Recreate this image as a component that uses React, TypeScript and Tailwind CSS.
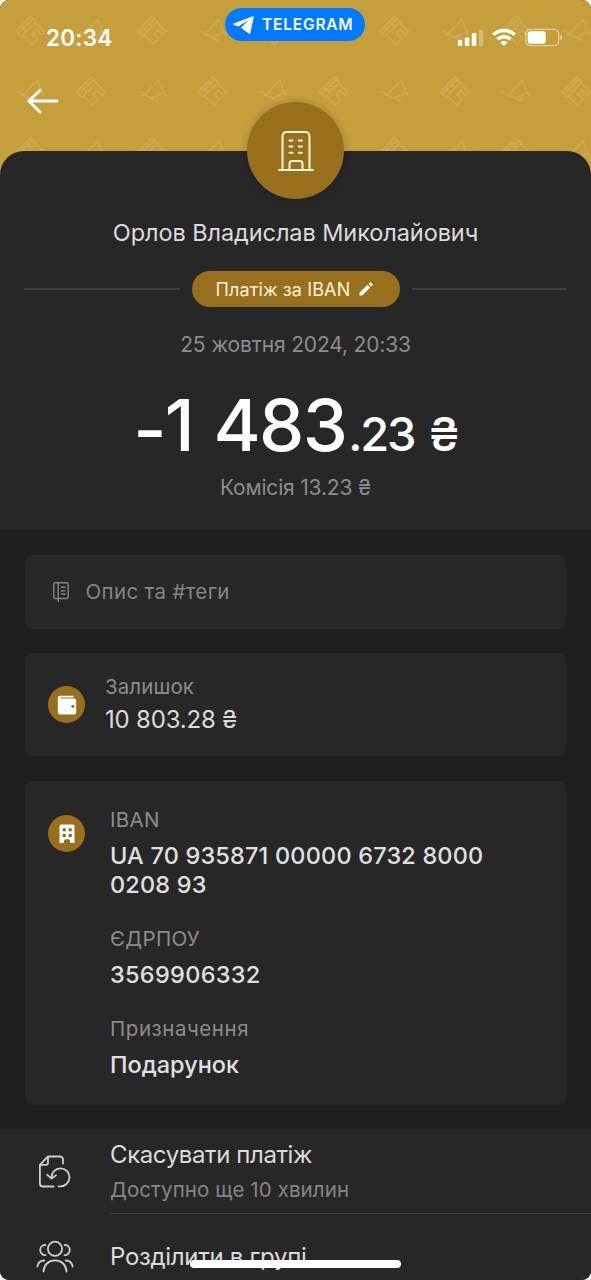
import React from "react";

function HeaderPattern() {
  return (
    <svg className="absolute inset-0 h-full w-full" aria-hidden="true">
      <defs>
        <pattern id="motif" x="0.5" y="0.5" width="121.3" height="121.3" patternUnits="userSpaceOnUse">
          <g fill="none" stroke="#dbb766" strokeOpacity="0.52" strokeWidth="1.3" strokeLinejoin="round" strokeLinecap="round">
            <g id="shop" transform="translate(30.3 30.8) rotate(-45)">
              <path d="M-10.500 -10.500H10.500V-3H-10.500ZM-8.500 -3V10H-0.500V3H5V10H9.500V-3M-3.500 -10.500V-3M3.500 -10.500V-3M-10.500 -7.500H10.500" />
            </g>
            <use href="#shop" x="0" y="0" transform="translate(60.650 60.650)" />
            <g id="cart" transform="translate(90.500 30.500)">
              <path d="M-13 0L-10 0.500L-8 4L7 -11.500L11 0M-8 3L0 6.500L13 0.500L13.500 4M0 6.500L5.500 9.500L6 6" />
            </g>
            <use href="#cart" transform="translate(-60.650 60.650)" />
          </g>
        </pattern>
      </defs>
      <rect width="100%" height="100%" fill="url(#motif)" />
    </svg>
  );
}

function StatusIcons() {
  return (
    <svg width="106" height="20" viewBox="0 0 106 20" fill="none">
      <g fill="#fff">
        <rect x="0.800" y="12" width="4.400" height="6" rx="1" />
        <rect x="7.800" y="9.500" width="4.400" height="8.500" rx="1" />
        <rect x="14.800" y="5" width="4.600" height="13" rx="1" />
        <rect x="21.800" y="2" width="4.400" height="16" rx="1" opacity="0.3" />
        <path d="M47 18 l-3.600 -3.500 a5.200 5.200 0 0 1 7.200 0 z" />
      </g>
      <path d="M40.500 11.300 a9.400 9.400 0 0 1 13 0 M36.300 6.800 a15.600 15.600 0 0 1 21.400 0" stroke="#fff" strokeWidth="3.500" />
      <rect x="68.700" y="1.300" width="33" height="16.400" rx="4.600" stroke="#fff" strokeOpacity="0.5" strokeWidth="1.300" />
      <rect x="70.700" y="3.300" width="18" height="12.400" rx="2.600" fill="#fff" />
      <path d="M103.300 6.800 q2 .8 2 2.700 t-2 2.700z" fill="#fff" fillOpacity="0.55" />
    </svg>
  );
}

function BuildingOutline() {
  return (
    <svg width="36" height="42" viewBox="0 0 36 42" fill="none" stroke="#fff3da" strokeWidth="2" strokeLinecap="round">
      <path d="M1 40H35M4.500 40V6a4 4 0 0 1 4-4h19a4 4 0 0 1 4 4v34M11.500 40v-6a3 3 0 0 1 3-3h7a3 3 0 0 1 3 3v6" />
      <path d="M11.500 10.500h3M20.800 10.500h3M11.500 16.500h3M20.800 16.500h3M11.500 22.700h3M20.800 22.700h3" />
    </svg>
  );
}

function NoteIcon() {
  return (
    <svg width="16" height="20" viewBox="0 0 16 20" fill="none" stroke="#858585" strokeWidth="1.400">
      <rect x="0.800" y="0.800" width="14.400" height="15.700" rx="1.500" />
      <path d="M5.300 1v19M8 5.300h4.500M8 8.700h4.500M8 12h4.500" />
    </svg>
  );
}

function WalletBadge() {
  return (
    <span className="flex size-[37px] shrink-0 items-center justify-center rounded-full bg-[#98701d]">
      <svg width="20" height="20" viewBox="0 0 20 20">
        <path d="M3 .8h13.500v1.700H3.700q-.7.700 0 1.100H17a2.200 2.200 0 0 1 2.200 2.200v11.400A2.200 2.200 0 0 1 17 19.400H3A2.200 2.200 0 0 1 .8 17.200V3A2.200 2.200 0 0 1 3 .8z" fill="#fff" />
        <circle cx="15.900" cy="11.300" r="1.600" fill="#98701d" />
      </svg>
    </span>
  );
}

function BuildingBadge() {
  return (
    <span className="flex size-[37px] shrink-0 items-center justify-center rounded-full bg-[#98701d]">
      <svg width="16" height="20" viewBox="0 0 16 20">
        <path d="M2.500.5h11a2 2 0 0 1 2 2V19H11v-2.200a1.500 1.500 0 0 0-1.500-1.500h-3A1.500 1.500 0 0 0 5 16.800V19H.5V2.500a2 2 0 0 1 2-2z" fill="#fff" />
        <path d="M3.700 4.200h3v3h-3zM9.700 4.200h3v3h-3zM3.700 10h3v3h-3zM9.700 10h3v3h-3z" fill="#7d6a10" />
      </svg>
    </span>
  );
}

function CancelIcon() {
  return (
    <svg className="overflow-visible" width="32" height="34" viewBox="0 0 32 34" fill="none" stroke="#cfcfcf" strokeWidth="1.800" strokeLinecap="round" strokeLinejoin="round">
      <path d="M25 8.500V4.500a3 3 0 0 0-3-3H10L1.900 9.800V28.500a3 3 0 0 0 3 3H15.500M2 9.800H8a2 2 0 0 0 2-2V1.800" />
      <path d="M20.500 31.300H22.300A9 9 0 1 0 13.500 22.500M9.300 19.800l4.300 3.800 4.400-3.300" />
    </svg>
  );
}

function GroupIcon() {
  return (
    <svg width="38" height="34" viewBox="0 0 38 34" fill="none" stroke="#cfcfcf" strokeWidth="1.800" strokeLinecap="round">
      <circle cx="19" cy="8.800" r="7.100" />
      <path d="M7.500 31.500c.5-7 5.300-11.200 11.500-11.200s11 4.200 11.500 11.200M9.300 5C6 4.800 4.200 7.500 4.200 10s2 5.200 5.300 5.200M28.700 5c3.300-.2 5.100 2.500 5.100 5s-2 5.200-5.300 5.200M1.300 26.500c.8-4 3.300-6 7-6M36.700 26.500c-.8-4-3.300-6-7-6" />
    </svg>
  );
}

export default function App() {
  return (
    <div className="h-[1280px] w-[591px] overflow-hidden bg-white font-['Inter',sans-serif]">
      <div className="relative flex h-full flex-col overflow-hidden rounded-[9px] bg-[#1f1f1f]">
        <header className="relative h-[175px] shrink-0 bg-[#c69f3d]">
          <HeaderPattern />
          <div className="relative flex h-[76px] items-center justify-between pr-[28px] pl-[46px]">
            <span className="text-[22.5px] font-semibold tracking-[0.2px] text-white">20:34</span>
            <StatusIcons />
          </div>
          <div className="absolute top-[8px] left-[225px] flex h-[33px] w-[140px] items-center rounded-full bg-[#007aff] pl-[8px]">
            <svg width="21" height="18" viewBox="0 0 21 18" fill="#fff">
              <path d="M20.800.8c.1-.6-.4-.8-1-.6L.8 7.600c-.8.300-.8 1 0 1.300l4.600 1.600L16 3.800 7.900 11.700l7.800 5.900c.8.500 1.400.3 1.600-.6z" />
            </svg>
            <span className="ml-[8px] pt-px text-[15.5px] font-semibold tracking-[0.8px] text-white">TELEGRAM</span>
          </div>
          <button className="relative ml-[27px] block h-[49px]" aria-label="Назад">
            <svg width="32" height="26" viewBox="0 0 32 26" fill="none" stroke="#fff" strokeWidth="2.800" strokeLinecap="round" strokeLinejoin="round">
              <path d="M30 13H1.800M13 2.200L1.800 13l11.200 11" />
            </svg>
          </button>
        </header>

        <section className="relative -mt-[24px] flex h-[379px] shrink-0 flex-col items-center rounded-t-[24px] bg-[#272727]">
          <div className="-mt-[49px] flex size-[97px] shrink-0 items-center justify-center rounded-full bg-[#98701d] shadow-[0_0_8px_rgba(0,0,0,0.2)]">
            <BuildingOutline />
          </div>
          <h1 className="mt-[18px] text-[23.5px] leading-[32px] tracking-[-0.08px] whitespace-nowrap text-[#dcdcdc]">Орлов Владислав Миколайович</h1>
          <div className="mt-[22px] flex w-full items-center gap-[12px] px-[24px]">
            <span className="h-[2px] flex-1 bg-[#3d3d3d]" />
            <span className="flex h-[36px] w-[208px] items-center rounded-full bg-[#98701d] pl-[24px]">
              <span className="text-[18px] tracking-[0.12px] whitespace-nowrap text-[#fff3dc]">Платіж за IBAN</span>
              <svg className="ml-[9px]" width="14" height="14" viewBox="0 0 14 14" fill="#fff">
                <path d="M.5 13.500v-2.700L8.600 2.700l2.700 2.700-8.100 8.100zM9.600 1.700 10.800.5q.5-.4 1 0l1.700 1.700q.4.500 0 1l-1.200 1.200z" />
              </svg>
            </span>
            <span className="h-[2px] flex-1 bg-[#3d3d3d]" />
          </div>
          <p className="mt-[23px] text-[21px] leading-[30px] tracking-[-0.16px] whitespace-nowrap text-[#8c8c8c]">25 жовтня 2024, 20:33</p>
          <p className="mt-[19px] h-[92px] text-[72px] leading-[92px] font-medium tracking-[-1.7px] whitespace-nowrap text-white [word-spacing:3px]">
            <span className="inline-block translate-y-[5px]">-</span>1 483
            <span className="ml-[2px] text-[47px] tracking-[-2.2px] [word-spacing:4px]">.23 ₴</span>
          </p>
          <p className="mt-[2px] text-[21px] leading-[30px] tracking-[-0.18px] whitespace-nowrap text-[#8c8c8c]">Комісія 13.23 ₴</p>
        </section>

        <main className="flex shrink-0 flex-col gap-[25px] px-[25px] pt-[25px]">
          <div className="flex h-[74px] items-center rounded-[8px] bg-[#272727] pl-[28px]">
            <NoteIcon />
            <span className="ml-[16.5px] text-[20.5px] tracking-[0.35px] text-[#858585]">Опис та #теги</span>
          </div>

          <div className="-mt-px flex h-[103px] items-center rounded-[8px] bg-[#272727] pl-[23px]">
            <WalletBadge />
            <div className="ml-[20px] pb-[2px]">
              <p className="text-[20.5px] leading-[32px] tracking-[0.1px] text-[#8c8c8c]">Залишок</p>
              <p className="text-[24px] leading-[34px] tracking-[-0.2px] text-[#dcdcdc]">10 803.28 ₴</p>
            </div>
          </div>

          <div className="flex h-[324px] items-start rounded-[8px] bg-[#272727] pt-[24px] pl-[23px]">
            <div className="pt-[10px]">
              <BuildingBadge />
            </div>
            <dl className="ml-[25px] whitespace-nowrap">
              <dt className="text-[20.5px] leading-[30px] tracking-[0.3px] text-[#8c8c8c]">IBAN</dt>
              <dd className="mt-[6px] text-[23.5px] leading-[29px] font-medium tracking-[0.18px] text-[#e0e0e0]">
                UA 70 935871 00000 6732 8000
                <br />
                0208 93
              </dd>
              <dt className="mt-[25px] text-[20.5px] leading-[30px] tracking-[0.35px] text-[#8c8c8c]">ЄДРПОУ</dt>
              <dd className="mt-[6px] text-[23.5px] leading-[30px] font-medium tracking-[0.3px] text-[#e0e0e0]">3569906332</dd>
              <dt className="mt-[24px] text-[20.5px] leading-[30px] tracking-[0.55px] text-[#8c8c8c]">Призначення</dt>
              <dd className="mt-[6px] text-[23.5px] leading-[30px] font-medium text-[#e0e0e0]">Подарунок</dd>
            </dl>
          </div>
        </main>

        <section className="mt-[24px] flex-1 bg-[#272727] whitespace-nowrap">
          <div className="flex h-[85px] pl-[38px]">
            <div className="w-[72px] pt-[26px]">
              <CancelIcon />
            </div>
            <div className="flex-1 border-b border-[#3d3d3d] pt-[9px]">
              <p className="text-[24px] leading-[34px] tracking-[-0.4px] text-[#dcdcdc]">Скасувати платіж</p>
              <p className="text-[20.5px] leading-[35px] tracking-[0.1px] text-[#858585]">Доступно ще 10 хвилин</p>
            </div>
          </div>
          <div className="flex pl-[36px]">
            <div className="w-[74px] pt-[26px]">
              <GroupIcon />
            </div>
            <p className="pt-[26px] text-[24px] leading-[34px] tracking-[-0.3px] text-[#dcdcdc]">Розділити в групі</p>
          </div>
        </section>

        <div className="absolute bottom-[12px] left-[190px] h-[8px] w-[211px] rounded-full bg-white" />
      </div>
    </div>
  );
}
